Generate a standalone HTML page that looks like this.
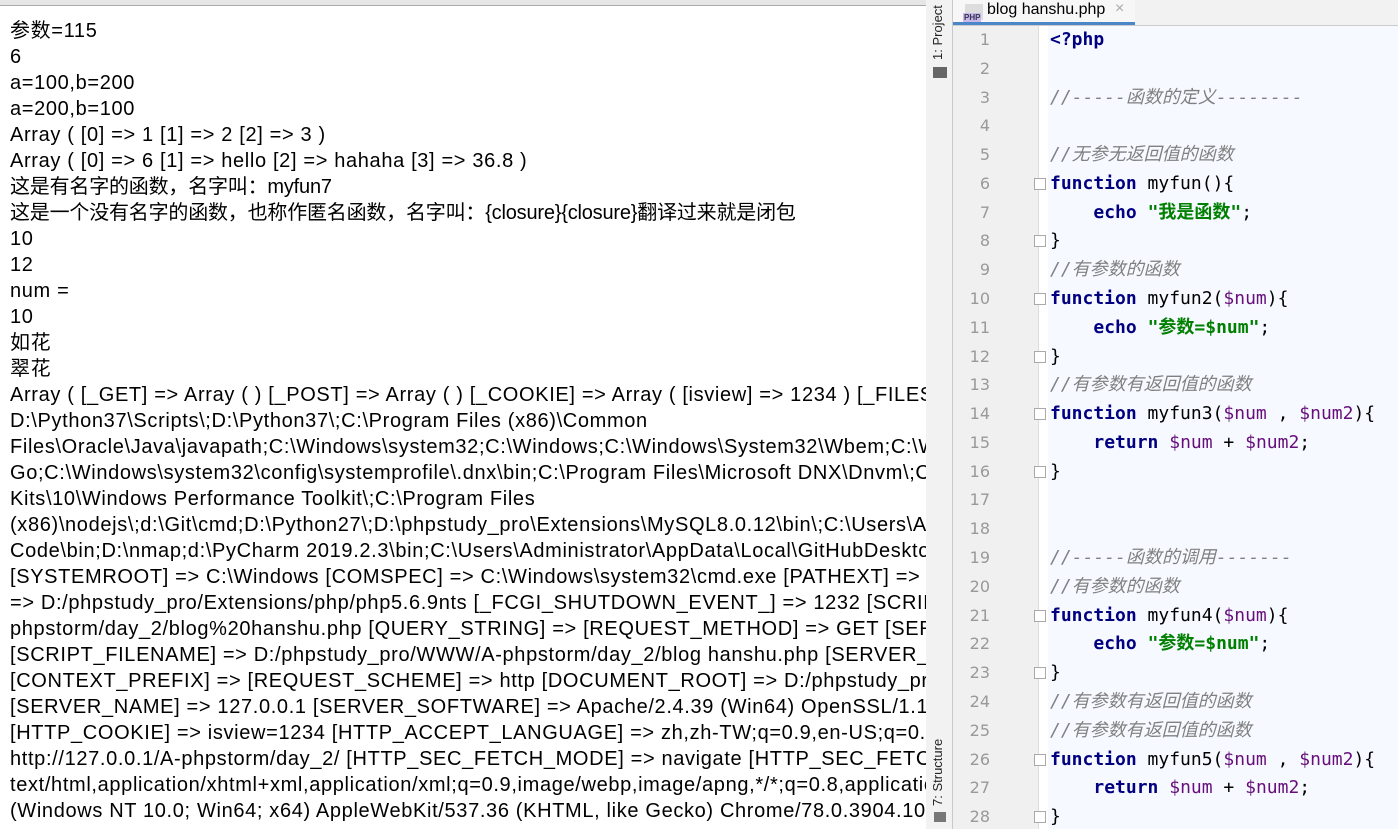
<!DOCTYPE html>
<html><head><meta charset="utf-8"><style>
body{margin:0;width:1398px;height:829px;overflow:hidden;background:#fff;position:relative;font-family:"Liberation Sans","Noto Sans CJK SC",sans-serif}
#top{position:absolute;left:0;top:0;width:926px;height:5px;background:#e6e6e6;border-bottom:1px solid #aaa}
#out{position:absolute;left:10px;top:18px;width:916px;overflow:hidden;white-space:nowrap;font-size:20px;letter-spacing:0.65px;line-height:26px;color:#000}
#out div{height:26px}
.cj{letter-spacing:-0.2px}
#strip{position:absolute;left:926px;top:0;width:26px;height:829px;background:#f2f2f2;border-right:1px solid #c9c9c9}
.vt{position:absolute;transform:rotate(-90deg);transform-origin:left top;font-size:13px;color:#222;white-space:nowrap}
#tabs{position:absolute;left:953px;top:0;width:445px;height:25px;background:#f2f2f2;border-bottom:1px solid #ccc}
#tab{position:absolute;left:0;top:0;width:182px;height:22px;background:#f7f7f7;border-bottom:3px solid #4a86c8;font-size:16px}
#gut{position:absolute;left:953px;top:26px;width:85px;height:803px;background:#f0f0f0;border-right:1px solid #ddd}
#code{position:absolute;left:1048px;top:26px;width:350px;height:803px;background:#f6f9ff}
.ln{position:absolute;left:953px;width:37px;height:20px;line-height:20px;text-align:right;font-family:"DejaVu Sans","Liberation Sans",sans-serif;font-size:16px;color:#999}
.cl{position:absolute;left:1050px;height:24px;line-height:24px;font-family:"DejaVu Sans Mono","Noto Sans CJK SC",monospace;font-size:18px;white-space:pre;color:#000}
.k{color:#000080;font-weight:bold}.c{color:#808080;font-style:italic}.s{color:#008000;font-weight:bold}.v{color:#660e7a}.f{color:#000}
.fold{position:absolute;left:1034px;width:10px;height:10px;border:1px solid #aaa;background:#fff}
</style></head><body>
<div id="top"></div>
<div id="out"><div>参数=115</div><div>6</div><div>a=100,b=200</div><div>a=200,b=100</div><div>Array ( [0] =&gt; 1 [1] =&gt; 2 [2] =&gt; 3 )</div><div>Array ( [0] =&gt; 6 [1] =&gt; hello [2] =&gt; hahaha [3] =&gt; 36.8 )</div><div class="cj">这是有名字的函数，名字叫：myfun7</div><div class="cj">这是一个没有名字的函数，也称作匿名函数，名字叫：{closure}{closure}翻译过来就是闭包</div><div>10</div><div>12</div><div>num =</div><div>10</div><div>如花</div><div>翠花</div><div>Array ( [_GET] =&gt; Array ( ) [_POST] =&gt; Array ( ) [_COOKIE] =&gt; Array ( [isview] =&gt; 1234 ) [_FILES] =&gt; Array</div><div>D:\Python37\Scripts\;D:\Python37\;C:\Program Files (x86)\Common</div><div>Files\Oracle\Java\javapath;C:\Windows\system32;C:\Windows;C:\Windows\System32\Wbem;C:\Windows</div><div>Go;C:\Windows\system32\config\systemprofile\.dnx\bin;C:\Program Files\Microsoft DNX\Dnvm\;C:\</div><div>Kits\10\Windows Performance Toolkit\;C:\Program Files</div><div>(x86)\nodejs\;d:\Git\cmd;D:\Python27\;D:\phpstudy_pro\Extensions\MySQL8.0.12\bin\;C:\Users\Admi</div><div>Code\bin;D:\nmap;d:\PyCharm 2019.2.3\bin;C:\Users\Administrator\AppData\Local\GitHubDesktop\bin</div><div>[SYSTEMROOT] =&gt; C:\Windows [COMSPEC] =&gt; C:\Windows\system32\cmd.exe [PATHEXT] =&gt; .COM;.EXE</div><div>=&gt; D:/phpstudy_pro/Extensions/php/php5.6.9nts [_FCGI_SHUTDOWN_EVENT_] =&gt; 1232 [SCRIPT_NAME]</div><div>phpstorm/day_2/blog%20hanshu.php [QUERY_STRING] =&gt; [REQUEST_METHOD] =&gt; GET [SERVER_PROTOCOL]</div><div>[SCRIPT_FILENAME] =&gt; D:/phpstudy_pro/WWW/A-phpstorm/day_2/blog hanshu.php [SERVER_ADMIN]</div><div>[CONTEXT_PREFIX] =&gt; [REQUEST_SCHEME] =&gt; http [DOCUMENT_ROOT] =&gt; D:/phpstudy_pro/WWW</div><div>[SERVER_NAME] =&gt; 127.0.0.1 [SERVER_SOFTWARE] =&gt; Apache/2.4.39 (Win64) OpenSSL/1.1.1b mod_fcgid</div><div>[HTTP_COOKIE] =&gt; isview=1234 [HTTP_ACCEPT_LANGUAGE] =&gt; zh,zh-TW;q=0.9,en-US;q=0.8,en;q=0.7</div><div>http://127.0.0.1/A-phpstorm/day_2/ [HTTP_SEC_FETCH_MODE] =&gt; navigate [HTTP_SEC_FETCH_SITE]</div><div>text/html,application/xhtml+xml,application/xml;q=0.9,image/webp,image/apng,*/*;q=0.8,application</div><div>(Windows NT 10.0; Win64; x64) AppleWebKit/537.36 (KHTML, like Gecko) Chrome/78.0.3904.108 Safari</div></div>
<div id="strip">
<div class="vt" style="left:4px;top:60px">1: Project</div>
<div style="position:absolute;left:7px;top:67px;width:14px;height:11px;background:#666"></div>
<div class="vt" style="left:4px;top:806px">7: Structure</div>
<div style="position:absolute;left:8px;top:812px;width:12px;height:10px;background:#777"></div>
</div>
<div id="tabs"><div id="tab">
<div style="position:absolute;left:12px;top:4px;width:18px;height:16px;background:#ddd"><div style="position:absolute;left:-2px;top:9px;font-size:8px;background:#c9b8e8;color:#335;font-weight:bold;padding:0 1px">PHP</div></div>
<span style="position:absolute;left:34px;top:1px;color:#000">blog hanshu.php</span><span style="position:absolute;left:162px;top:0;color:#aaa">×</span></div></div>
<div id="gut"></div><div id="code"></div>
<div id="lines"></div>
<script>
var L=[
'<span class="k">&lt;?php</span>','',
'<span class="c">//-----函数的定义--------</span>','',
'<span class="c">//无参无返回值的函数</span>',
'<span class="k">function</span> <span class="f">myfun</span>(){',
'    <span class="k">echo</span> <span class="s">"我是函数"</span>;','}',
'<span class="c">//有参数的函数</span>',
'<span class="k">function</span> myfun2(<span class="v">$num</span>){',
'    <span class="k">echo</span> <span class="s">"参数=$num"</span>;','}',
'<span class="c">//有参数有返回值的函数</span>',
'<span class="k">function</span> myfun3(<span class="v">$num</span> , <span class="v">$num2</span>){',
'    <span class="k">return</span> <span class="v">$num</span> + <span class="v">$num2</span>;','}','','',
'<span class="c">//-----函数的调用-------</span>',
'<span class="c">//有参数的函数</span>',
'<span class="k">function</span> myfun4(<span class="v">$num</span>){',
'    <span class="k">echo</span> <span class="s">"参数=$num"</span>;','}',
'<span class="c">//有参数有返回值的函数</span>',
'<span class="c">//有参数有返回值的函数</span>',
'<span class="k">function</span> myfun5(<span class="v">$num</span> , <span class="v">$num2</span>){',
'    <span class="k">return</span> <span class="v">$num</span> + <span class="v">$num2</span>;','}'];
var h='',folds=[6,8,10,12,14,16,21,23,26,28];
for(var i=0;i<28;i++){var y=40+i*28.78;
h+='<div class="ln" style="top:'+(y-10)+'px">'+(i+1)+'</div>';
h+='<div class="cl" style="top:'+(y-12)+'px">'+L[i]+'</div>';
if(folds.indexOf(i+1)>=0)h+='<div class="fold" style="top:'+(y-6)+'px"></div>';}
document.getElementById('lines').innerHTML=h;
</script>
</body></html>
